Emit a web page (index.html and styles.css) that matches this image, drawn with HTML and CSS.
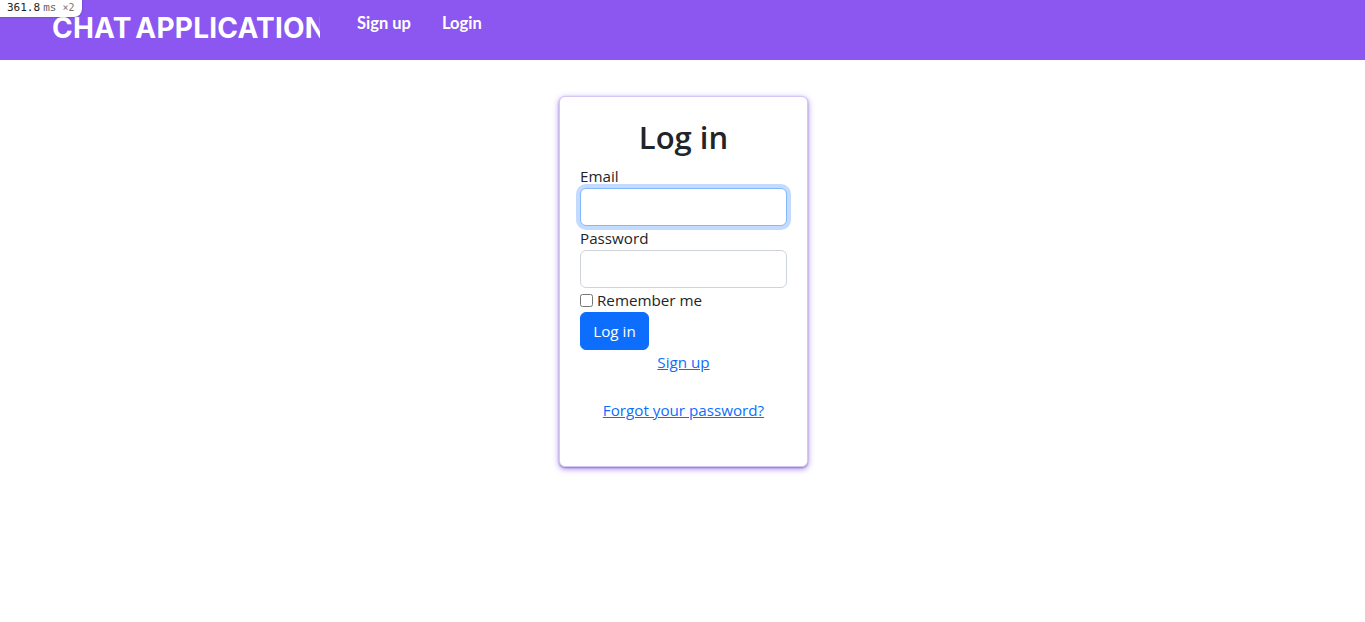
FILE: index.html
```html
<!DOCTYPE html>
<html lang="en">
<head>
    <meta charset="UTF-8">
    <meta name="viewport" content="width=device-width, initial-scale=1.0">
    <title>Chat Application</title>
    <link rel="stylesheet" href="styles.css">
</head>
<body>
    <div class="timer"><span class="timer-value">361.8</span><span class="timer-unit">ms</span><span class="timer-count">×2</span></div>
    <nav class="navbar">
        <div class="brand"><a href="#">CHAT APPLICATION</a></div>
        <a class="nav-link" href="#">Sign up</a>
        <a class="nav-link" href="#">Login</a>
    </nav>
    <main class="page">
        <form class="card">
            <h1>Log in</h1>
            <label class="field-label" for="email">Email</label>
            <input class="field field-focus" id="email" type="email">
            <label class="field-label" for="password">Password</label>
            <input class="field" id="password" type="password">
            <div class="remember">
                <input id="remember" type="checkbox">
                <label for="remember">Remember me</label>
            </div>
            <button class="btn" type="button">Log in</button>
            <div class="card-link"><a href="#">Sign up</a></div>
            <div class="card-link forgot"><a href="#">Forgot your password?</a></div>
        </form>
    </main>
</body>
</html>
```

FILE: styles.css
```css
* {
    margin: 0;
    padding: 0;
    box-sizing: border-box;
}
body {
    font-family: "Open Sans", "Noto Sans", sans-serif;
    font-size: 15.2px;
    line-height: 24px;
    color: #212529;
    background-color: #ffffff;
    position: relative;
}
a {
    color: #0d6efd;
}
.timer {
    position: absolute;
    top: 0;
    left: 0;
    display: flex;
    align-items: baseline;
    height: 17px;
    width: 82px;
    padding-left: 7px;
    background: #ffffff;
    border-bottom-right-radius: 8px;
    font-family: "DejaVu Sans Mono", monospace;
    font-size: 11px;
    line-height: 15px;
    color: #222222;
    box-shadow: 0 0 2px rgba(0, 0, 0, 0.4);
    white-space: nowrap;
}
.timer-unit {
    margin-left: 3px;
    color: #666666;
}
.timer-count {
    margin-left: 6px;
    font-size: 10px;
    color: #777777;
}
.navbar {
    display: flex;
    align-items: flex-start;
    height: 60px;
    padding-left: 52px;
    background-color: #8b57f0;
}
.brand {
    width: 268px;
    height: 60px;
    overflow: hidden;
    white-space: nowrap;
    margin-right: 37px;
    padding-top: 11px;
    font-family: "Inter", "Liberation Sans", sans-serif;
    font-size: 28px;
    line-height: 34px;
    font-weight: 700;
    letter-spacing: 0.2px;
    word-spacing: -3px;
}
.brand a {
    color: #ffffff;
    text-decoration: none;
}
.nav-link {
    margin-right: 31px;
    padding-top: 11px;
    font-family: "Lato", sans-serif;
    font-size: 16.5px;
    font-weight: 700;
    color: #ffffff;
    text-decoration: none;
}
.page {
    display: flex;
    justify-content: center;
    padding-top: 36px;
    padding-bottom: 40px;
    margin-left: 2px;
}
.card {
    width: 249px;
    height: 371px;
    padding: 20px;
    background: #ffffff;
    border: 1px solid #d4c6f5;
    border-radius: 6px;
    box-shadow: 0 1px 2px rgba(0, 0, 0, 0.3), 0 2px 6px rgba(139, 92, 246, 0.7);
}
.card h1 {
    font-size: 31px;
    line-height: 38px;
    font-weight: 600;
    text-align: center;
    margin-top: 1px;
    margin-bottom: 8px;
}
.field-label {
    display: block;
    height: 24px;
    line-height: 24px;
}
.field {
    display: block;
    width: 100%;
    height: 38px;
    border: 1px solid #ced4da;
    border-radius: 6px;
    background: #ffffff;
    outline: none;
}
.field-focus {
    border-color: #86b7fe;
    box-shadow: 0 0 0 4px #c2dbfe;
}
.remember {
    display: flex;
    align-items: center;
    gap: 4px;
    height: 24px;
}
.remember input {
    width: 13px;
    height: 13px;
}
.btn {
    display: block;
    width: 69px;
    height: 38px;
    border: 1px solid #0d6efd;
    border-radius: 6px;
    background-color: #0d6efd;
    color: #ffffff;
    font-family: inherit;
    font-size: 15.2px;
}
.card-link {
    text-align: center;
    height: 24px;
}
.forgot {
    margin-top: 24px;
}
```
